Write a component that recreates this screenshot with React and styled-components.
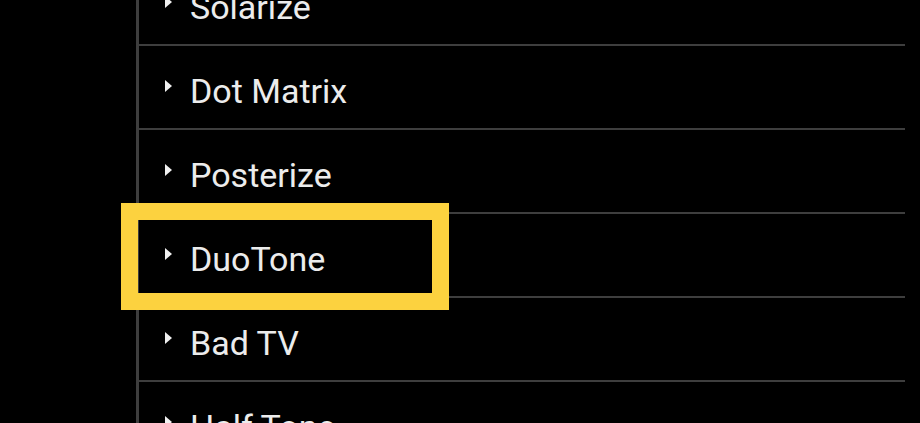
import React from "react";
import styled, { createGlobalStyle } from "styled-components";

const GlobalStyle = createGlobalStyle`
  html, body {
    margin: 0;
    padding: 0;
    background: #000;
  }
  body {
    font-family: Roboto, "Liberation Sans", sans-serif;
    overflow: hidden;
  }
`;

const effects = ["Solarize", "Dot Matrix", "Posterize", "DuoTone", "Bad TV", "Half Tone"];

const App = () => {
  return (
    <>
      <GlobalStyle />
      <Page>
        <Sidebar />
        <Panel>
          <List>
            {effects.map((name) => (
              <Row key={name}>
                <Caret />
                <Label>{name}</Label>
                {name === "DuoTone" && <Highlight />}
              </Row>
            ))}
          </List>
        </Panel>
      </Page>
    </>
  );
};

const Page = styled.div`
  display: flex;
  width: 920px;
  height: 423px;
  overflow: hidden;
  background: #000;
`;

const Sidebar = styled.div`
  width: 136px;
  flex-shrink: 0;
  border-right: 3px solid #3e3e3e;
`;

// panel is scrolled, first row is partly hidden
const Panel = styled.div`
  width: 766px;
  flex-shrink: 0;
`;

const List = styled.div`
  margin-top: -38px;
`;

const Row = styled.div`
  position: relative;
  display: flex;
  align-items: center;
  height: 82px;
  padding-left: 26px;
  border-bottom: 2px solid #3e3e3e;
`;

const Caret = styled.span`
  width: 0;
  height: 0;
  margin-top: -3px;
  border-top: 6px solid transparent;
  border-bottom: 6px solid transparent;
  border-left: 7px solid #f0f0f0;
`;

const Label = styled.span`
  margin-left: 18px;
  padding-top: 7px;
  font-size: 34px;
  color: #ececec;
  line-height: 1;
`;

const Highlight = styled.div`
  position: absolute;
  left: -18px;
  top: -11px;
  width: 328px;
  height: 107px;
  box-sizing: border-box;
  border: 17px solid #fcd23f;
  pointer-events: none;
`;

export default App;
